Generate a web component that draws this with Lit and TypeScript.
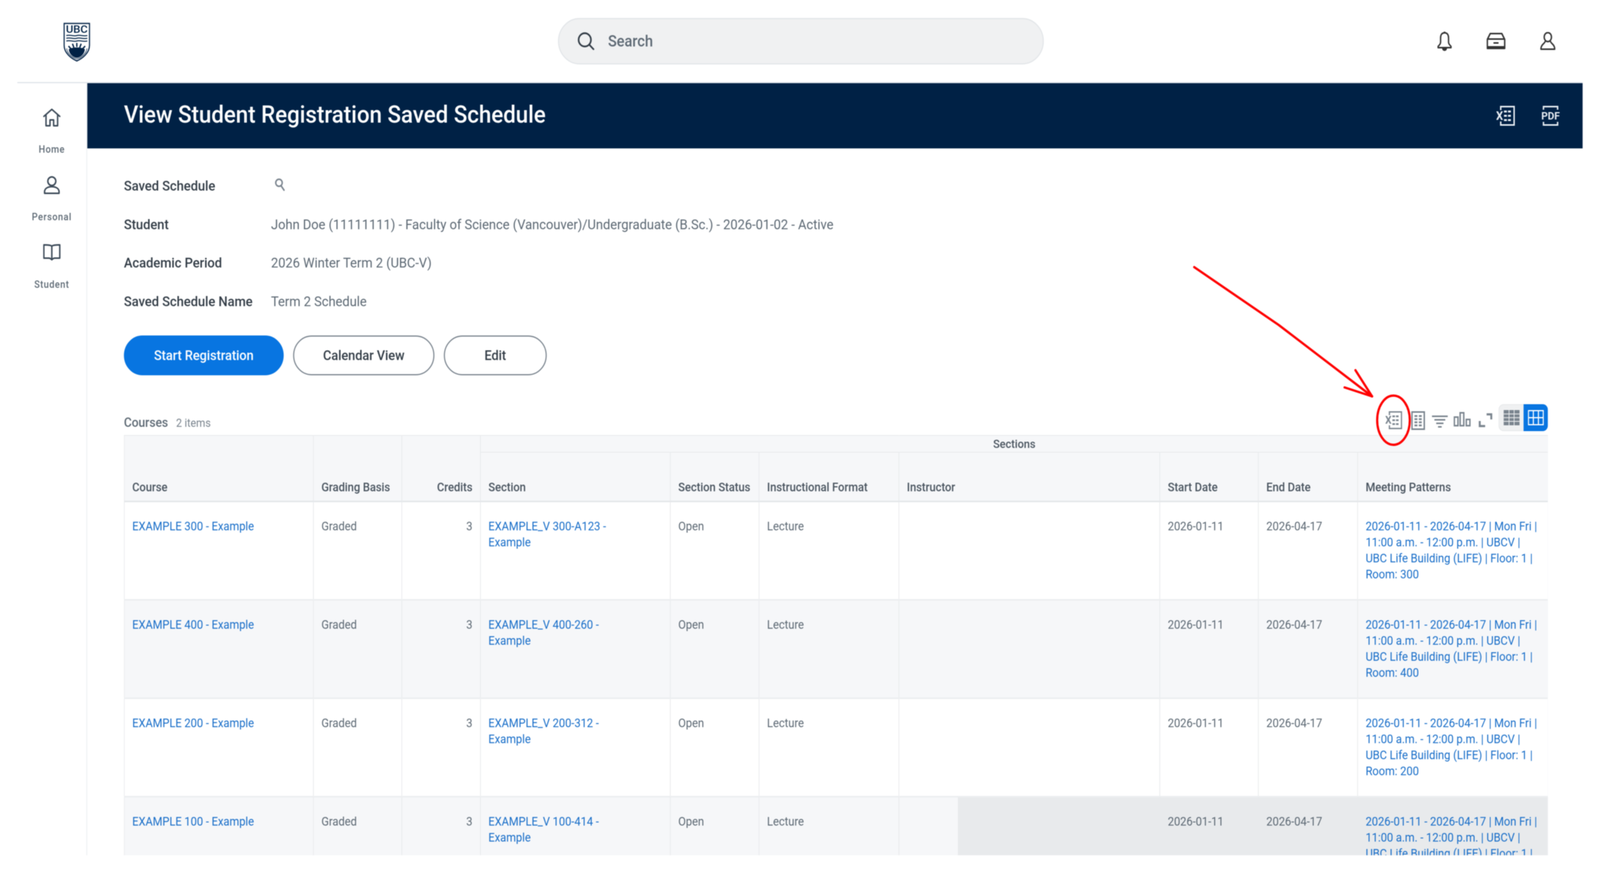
import { LitElement, html, css, svg } from 'lit'
import { customElement } from 'lit/decorators.js'

interface Course {
  course: string
  section: string
  room: string
}

const PAGE_WIDTH = 4416

const courses: Course[] = [
  { course: 'EXAMPLE 300 - Example', section: 'EXAMPLE_V 300-A123 -\nExample', room: '300' },
  { course: 'EXAMPLE 400 - Example', section: 'EXAMPLE_V 400-260 -\nExample', room: '400' },
  { course: 'EXAMPLE 200 - Example', section: 'EXAMPLE_V 200-312 -\nExample', room: '200' },
  { course: 'EXAMPLE 100 - Example', section: 'EXAMPLE_V 100-414 -\nExample', room: '100' }
]

const meeting = (room: string) =>
  `2026-01-11 - 2026-04-17 | Mon Fri |\n11:00 a.m. - 12:00 p.m. | UBCV |\nUBC Life Building (LIFE) | Floor: 1 |\nRoom: ${room}`

// small dashes used by the spreadsheet icons
const dashes = (xs: number[], ys: number[], w: number, h: number) =>
  xs.flatMap(x => ys.map(y => svg`<rect x=${x} y=${y} width=${w} height=${h} fill="currentColor" stroke="none"/>`))

const xlsIcon = (cls: string) => html`
  <svg class=${cls} viewBox="0 0 51 51" fill="none" stroke="currentColor" stroke-width="4">
    <path d="M12 11V2H49V49H12V40" />
    ${dashes([21, 32], [12, 23, 34], 8, 5)}
    <text x="-1" y="36" font-family="Roboto, sans-serif" font-size="31" font-weight="700" fill="currentColor" stroke="none">X</text>
  </svg>
`

@customElement('app-root')
export class AppRoot extends LitElement {
  static styles = css`
    :host {
      display: block;
      width: 100%;
      height: 2238px;
      overflow: hidden;
      background: #fff;
      font-family: Roboto, 'Liberation Sans', sans-serif;
      color: #333d47;
    }

    /* the reference is a soft, upscaled capture */
    .page {
      width: 4416px;
      height: 2238px;
      position: relative;
      transform-origin: 0 0;
      filter: blur(1px);
    }

    svg {
      display: block;
      flex: none;
    }

    .top {
      height: 210px;
      margin: 0 48px;
      border-bottom: 3px solid #dfe4ea;
      display: flex;
      align-items: center;
    }

    .logo-wrap {
      width: 1492px;
      padding-left: 127px;
      box-sizing: border-box;
    }

    .logo {
      width: 74px;
      height: 100px;
      margin-top: 6px;
    }

    .search {
      width: 1341px;
      height: 119px;
      box-sizing: border-box;
      border: 3px solid #e3e6e9;
      border-radius: 60px;
      background: #f0f1f2;
      display: flex;
      align-items: center;
      gap: 37px;
      padding-left: 50px;
      font-size: 40px;
      font-weight: 500;
      color: #5e6a75;
    }

    .search svg {
      width: 48px;
      height: 48px;
      color: #333d47;
    }

    .top-icons {
      flex: 1;
      display: flex;
      justify-content: flex-end;
      align-items: center;
      gap: 96px;
      padding-right: 75px;
      color: #333;
    }

    .bell { width: 40px; height: 51px; }
    .box { width: 52px; height: 42px; }
    .person { width: 42px; height: 46px; }

    .body {
      display: flex;
      height: 1977px;
      margin-right: 48px;
    }

    .side {
      width: 241px;
      box-sizing: border-box;
      border-right: 3px solid #f0f2f4;
      display: flex;
      flex-direction: column;
      align-items: center;
      padding: 65px 0 0 48px;
      color: #3c4a58;
    }

    .nav {
      display: flex;
      flex-direction: column;
      align-items: center;
      height: 173px;
      font-size: 25px;
      font-weight: 500;
      letter-spacing: 1.4px;
      color: #5e6a75;
    }

    .nav svg {
      width: 48px;
      height: 46px;
      color: #3c4a58;
      margin-bottom: 44px;
    }

    .main {
      flex: 1;
      min-width: 0;
      display: flex;
      flex-direction: column;
    }

    .bar {
      height: 167px;
      background: #002145;
      color: #fff;
      display: flex;
      align-items: center;
      justify-content: space-between;
      padding: 0 63px 0 101px;
    }

    h1 {
      margin: 0 0 8px;
      font-size: 61.5px;
      font-weight: 500;
    }

    .bar-icons {
      display: flex;
      gap: 73px;
      color: #e8edf3;
    }

    .bar-icons svg {
      width: 51px;
      height: 51px;
    }

    .content {
      flex: 1;
      min-height: 0;
      padding: 47px 96px 0 101px;
      display: flex;
      flex-direction: column;
    }

    .form {
      display: grid;
      grid-template-columns: 406px 1fr;
      grid-auto-rows: 98.6px;
      align-items: center;
      font-size: 35.5px;
      color: #5e6a75;
    }

    .form b {
      font-weight: 500;
      color: #333d47;
    }

    .lookup {
      width: 30px;
      height: 34px;
      margin: -6px 0 0 10px;
      color: #7b858f;
    }

    .actions {
      display: flex;
      gap: 26px;
      margin-top: 38px;
    }

    .btn {
      height: 102px;
      box-sizing: border-box;
      border-radius: 51px;
      border: 3px solid #7b858f;
      background: #fff;
      display: flex;
      align-items: center;
      justify-content: center;
      font-size: 35px;
      font-weight: 500;
      color: #333d47;
    }

    .btn.primary {
      width: 441px;
      background: #0875e1;
      border-color: #0875e1;
      color: #fff;
    }

    .btn.cal { width: 390px; }
    .btn.edit { width: 284px; }

    .tools {
      height: 69px;
      margin: 74px 0 10px;
      display: flex;
      align-items: center;
    }

    .count {
      flex: 1;
      font-size: 33px;
      font-weight: 500;
      color: #5e6a75;
      padding-top: 24px;
    }

    .count span {
      font-size: 29px;
      font-weight: 400;
      color: #7b858f;
      margin-left: 22px;
    }

    .tool {
      color: #7b858f;
    }

    .t-xls { width: 46px; height: 46px; margin: 12px 25px 0 0; }
    .t-page { width: 38px; height: 48px; margin: 14px 19px 0 0; }
    .t-filter { width: 44px; height: 32px; margin: 20px 16px 0 0; }
    .t-chart { width: 47px; height: 37px; margin: 8px 22px 0 0; }
    .t-expand { width: 38px; height: 36px; margin: 12px 17px 0 0; }

    .toggle {
      display: flex;
      height: 69px;
      width: 136px;
    }

    .toggle div {
      flex: 1;
      display: flex;
      align-items: center;
      justify-content: center;
      box-sizing: border-box;
    }

    .toggle .off {
      background: #f0f1f2;
      border: 2px solid #e6e8ea;
      border-right: 0;
      border-radius: 14px 0 0 14px;
      color: #7b858f;
    }

    .toggle .on {
      background: #0875e1;
      border-radius: 0 14px 14px 0;
      color: #fff;
    }

    .toggle svg {
      width: 44px;
      height: 39px;
    }

    .table-wrap {
      flex: 1;
      min-height: 0;
      overflow: hidden;
    }

    table {
      table-layout: fixed;
      width: 3930px;
      border-collapse: collapse;
      font-size: 30.6px;
      line-height: 41px;
      color: #5e6a75;
    }

    col:nth-child(1) { width: 522px; }
    col:nth-child(2) { width: 244px; }
    col:nth-child(3) { width: 217px; }
    col:nth-child(4) { width: 524px; }
    col:nth-child(5) { width: 245px; }
    col:nth-child(6) { width: 386px; }
    col:nth-child(7) { width: 720px; }
    col:nth-child(8) { width: 272px; }
    col:nth-child(9) { width: 274px; }
    col:nth-child(10) { width: 526px; }

    th, td {
      border: 2px solid #e8eaec;
      padding: 0 21px;
      text-align: left;
      box-sizing: border-box;
    }

    th {
      background: #f6f7f9;
      font-weight: 500;
      color: #4a5560;
      vertical-align: bottom;
      padding-bottom: 14px;
      white-space: nowrap;
    }

    thead tr:first-child { height: 42px; }
    thead tr:last-child { height: 126px; }
    thead tr:last-child th, th[rowspan] { border-bottom: 4px solid #e4e7ea; }

    th.group {
      text-align: center;
      vertical-align: middle;
      padding: 0;
      font-size: 30px;
    }

    td {
      vertical-align: top;
      padding-top: 41px;
      white-space: pre-line;
      border-bottom-width: 4px;
      border-bottom-color: #eceef0;
    }

    tbody tr { height: 252px; }
    tbody tr:nth-child(even) td { background: #f6f7f9; }

    tbody tr.hover td.lit { background: #e8eaec; }
    tbody tr.hover td.part {
      background: linear-gradient(to right, #f6f7f9 162px, #e8eaec 162px);
    }

    th.num, td.num { text-align: right; }
    .link { color: #1a6fc9; }

    .mark {
      position: absolute;
      left: 0;
      top: 0;
      width: 4416px;
      height: 2238px;
      pointer-events: none;
    }
  `

  render() {
    // the drawing is 4416 wide, squeeze it when the window is narrower than that
    const fit = Math.min(1, window.innerWidth / PAGE_WIDTH)
    return html`
      <div class="page" style="transform: scaleX(${fit})">
      <div class="top">
        <div class="logo-wrap">${this.renderLogo()}</div>
        <div class="search">
          <svg viewBox="0 0 48 48" fill="none" stroke="currentColor" stroke-width="4.4" stroke-linecap="round">
            <circle cx="21" cy="21" r="17" /><path d="M33.5 33.5L45 45" />
          </svg>
          Search
        </div>
        <div class="top-icons">
          <svg class="bell" viewBox="0 0 40 51" fill="none" stroke="currentColor" stroke-width="3.8" stroke-linejoin="round">
            <path d="M20 4C12 4 9 10 9 17V28C9 33 5 36 2 39V42H38V39C35 36 31 33 31 28V17C31 10 28 4 20 4Z" />
            <path d="M20 1V4" />
            <path d="M15 44C16 50 24 50 25 44Z" fill="currentColor" />
          </svg>
          <svg class="box" viewBox="0 0 52 42" fill="none" stroke="currentColor" stroke-width="4" stroke-linejoin="round">
            <path d="M2 40V17L10 2H42L50 17V40Z" />
            <path d="M2 16H50" />
            <path d="M2 36H50" />
            <path d="M19 26H33" stroke-width="4" />
          </svg>
          <svg class="person" viewBox="0 0 42 46" fill="none" stroke="currentColor" stroke-width="3.8" stroke-linejoin="round">
            <ellipse cx="21" cy="13" rx="10" ry="11.5" />
            <path d="M14 23C13 30 2 31 2 44H40C40 31 29 30 28 23" />
          </svg>
        </div>
      </div>

      <div class="body">
        <nav class="side">
          <div class="nav">
            <svg viewBox="0 0 48 46" fill="none" stroke="currentColor" stroke-width="4" stroke-linejoin="round" stroke-linecap="round">
              <path d="M2 20L24 2L46 20" />
              <path d="M8 16V44H19V29H29V44H40V16" />
            </svg>
            Home
          </div>
          <div class="nav">
            <svg viewBox="0 0 48 46" fill="none" stroke="currentColor" stroke-width="4" stroke-linejoin="round">
              <circle cx="24" cy="13" r="11" />
              <path d="M4 44V40C4 31 14 27 24 27C34 27 44 31 44 40V44Z" />
            </svg>
            Personal
          </div>
          <div class="nav">
            <svg viewBox="0 0 48 46" fill="none" stroke="currentColor" stroke-width="4" stroke-linejoin="round">
              <path d="M24 6C20 3 8 3 2 3V37H16C20 37 24 41 24 41C24 41 28 37 32 37H46V3C40 3 28 3 24 6Z" />
              <path d="M24 6V41" />
            </svg>
            Student
          </div>
        </nav>

        <main class="main">
          <header class="bar">
            <h1>View Student Registration Saved Schedule</h1>
            <div class="bar-icons">
              ${xlsIcon('')}
              <svg viewBox="0 0 51 51" fill="none" stroke="currentColor" stroke-width="4">
                <path d="M6 10V2H45V10M6 41V49H45V41" />
                <text x="0" y="35" textLength="51" lengthAdjust="spacingAndGlyphs" font-family="Roboto, sans-serif" font-size="26" font-weight="700" fill="currentColor" stroke="none">PDF</text>
              </svg>
            </div>
          </header>

          <div class="content">
            <div class="form">
              <b>Saved Schedule</b>
              <svg class="lookup" viewBox="0 0 30 34" fill="none" stroke="currentColor" stroke-width="4" stroke-linecap="round">
                <circle cx="12" cy="12" r="9" /><path d="M18 20L26 31" />
              </svg>
              <b>Student</b>
              <span>John Doe (11111111) - Faculty of Science (Vancouver)/Undergraduate (B.Sc.) - 2026-01-02 - Active</span>
              <b>Academic Period</b>
              <span>2026 Winter Term 2 (UBC-V)</span>
              <b>Saved Schedule Name</b>
              <span>Term 2 Schedule</span>
            </div>

            <div class="actions">
              <div class="btn primary">Start Registration</div>
              <div class="btn cal">Calendar View</div>
              <div class="btn edit">Edit</div>
            </div>

            <div class="tools">
              <div class="count">Courses<span>2 items</span></div>
              ${this.renderTools()}
            </div>

            <div class="table-wrap">
              <table>
                <colgroup>${Array.from({ length: 10 }, () => html`<col />`)}</colgroup>
                <thead>
                  <tr>
                    <th rowspan="2">Course</th>
                    <th rowspan="2">Grading Basis</th>
                    <th rowspan="2" class="num">Credits</th>
                    <th colspan="7" class="group">Sections</th>
                  </tr>
                  <tr>
                    <th>Section</th>
                    <th>Section Status</th>
                    <th>Instructional Format</th>
                    <th>Instructor</th>
                    <th>Start Date</th>
                    <th>End Date</th>
                    <th>Meeting Patterns</th>
                  </tr>
                </thead>
                <tbody>
                  ${courses.map((c, i) => html`
                    <tr class=${i === 3 ? 'hover' : ''}>
                      <td class="link">${c.course}</td>
                      <td>Graded</td>
                      <td class="num">3</td>
                      <td class="link">${c.section}</td>
                      <td>Open</td>
                      <td>Lecture</td>
                      <td class="part"></td>
                      <td class="lit">2026-01-11</td>
                      <td class="lit">2026-04-17</td>
                      <td class="lit link">${meeting(c.room)}</td>
                    </tr>
                  `)}
                </tbody>
              </table>
            </div>
          </div>
        </main>
      </div>

      <svg class="mark" viewBox="0 0 4416 2238" fill="none" stroke="#f00" stroke-linecap="round" stroke-linejoin="round">
        <path d="M3296 684L3529 832L3787 1015" stroke-width="6" />
        <path d="M3741 948L3787 1015L3711 992" stroke-width="6" />
        <ellipse cx="3846" cy="1076" rx="45" ry="63" stroke-width="6" />
      </svg>
      </div>
    `
  }

  private renderLogo() {
    return html`
      <svg class="logo" viewBox="0 0 74 100" fill="none" stroke="#002145">
        <path d="M2 2H72V58C72 78 52 92 37 98C22 92 2 78 2 58Z" stroke-width="3" fill="#fff" />
        <text x="37" y="26" text-anchor="middle" textLength="60" lengthAdjust="spacingAndGlyphs" font-family="Roboto, sans-serif" font-size="25" font-weight="500" fill="#002145" stroke="none">UBC</text>
        <path d="M8 33C20 30 28 36 37 33C46 30 54 36 66 33M8 40C20 37 28 43 37 40C46 37 54 43 66 40M8 47C20 44 28 50 37 47C46 44 54 50 66 47" stroke-width="2.6" />
        <path d="M37 52V62M25 54L29 64M49 54L45 64M14 60L22 68M60 60L52 68" stroke-width="3.6" />
        <path d="M15 68C24 62 50 62 59 68C59 80 46 90 37 90C28 90 15 80 15 68Z" fill="#002145" stroke="none" />
        <path d="M9 66C10 78 24 90 37 93C50 90 64 78 65 66" stroke-width="1.6" />
      </svg>
    `
  }

  private renderTools() {
    return html`
      ${xlsIcon('tool t-xls')}
      <svg class="tool t-page" viewBox="0 0 38 48" fill="none" stroke="currentColor" stroke-width="4">
        <path d="M2 2H36V46H2Z" />
        ${dashes([9, 21], [10, 18, 26, 34], 8, 4.6)}
      </svg>
      <svg class="tool t-filter" viewBox="0 0 44 32" fill="none" stroke="currentColor" stroke-width="3.8">
        <path d="M0 2H44M7 11H37M12 20H32M17 29H27" />
      </svg>
      <svg class="tool t-chart" viewBox="0 0 47 37" fill="none" stroke="currentColor" stroke-width="4">
        <path d="M2 13H12V35H2ZM18 2H28V35H18ZM35 19H45V35H35Z" />
      </svg>
      <svg class="tool t-expand" viewBox="0 0 38 36" fill="none" stroke="currentColor" stroke-width="5.5">
        <path d="M22 3H35V16M3 20V33H18" />
      </svg>
      <div class="toggle">
        <div class="off">
          <svg viewBox="0 0 44 39">
            <rect width="44" height="39" fill="currentColor" />
            <path d="M0 10H44M0 19.5H44M0 29H44M15 0V39M29 0V39" stroke="#f0f1f2" stroke-width="2" />
          </svg>
        </div>
        <div class="on">
          <svg viewBox="0 0 44 39" fill="none" stroke="currentColor" stroke-width="3">
            <path d="M1.5 1.5H42.5V37.5H1.5ZM1.5 19.5H42.5M15 1.5V37.5M29 1.5V37.5" />
          </svg>
        </div>
      </div>
    `
  }
}

declare global {
  interface HTMLElementTagNameMap {
    'app-root': AppRoot
  }
}
